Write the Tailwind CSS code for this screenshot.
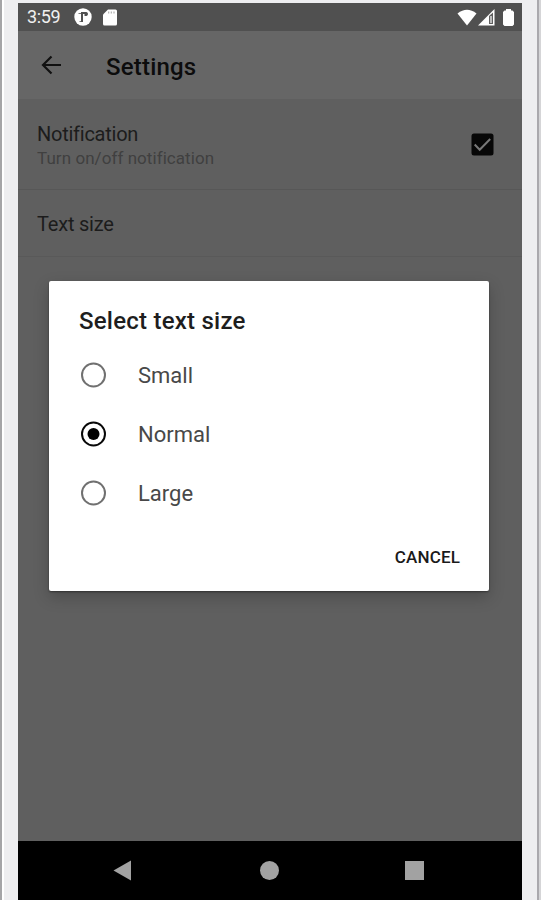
<!DOCTYPE html>
<html lang="en">
<head>
    <meta charset="UTF-8">
    <meta name="viewport" content="width=device-width, initial-scale=1.0">
    <title>Settings</title>
    <script src="https://cdn.jsdelivr.net/npm/@tailwindcss/browser@4"></script>
</head>
<body class="bg-[#eeeef0] font-[Roboto,sans-serif]">
    <!-- Phone frame -->
    <div class="relative w-[541px] h-[900px] overflow-hidden border-l-2 border-[#a5a5a7] pl-4 pr-[19px] pt-[3px] flex flex-col">
        <div class="absolute left-0 top-0 w-[2px] h-full bg-white"></div>
        <div class="absolute right-[2px] top-0 w-[2px] h-full bg-[#aaa9ad]"></div>
        <div class="absolute right-0 top-0 w-[2px] h-full bg-[#d5d5d7]"></div>

        <!-- Status bar -->
        <header class="h-[28px] shrink-0 bg-[#505050] flex items-center text-white pl-[9px] pr-[8px]">
            <span class="text-[18px] leading-none w-[47px] tracking-[-0.4px] text-[#f0f0f0]">3:59</span>
            <svg class="w-[18px] h-[18px]" viewBox="0 0 18 18">
                <circle cx="9" cy="9" r="8.7" fill="#fff"/>
                <path d="M4.500 5.500H7.800V13.500H5.500" fill="none" stroke="#777" stroke-width="1.200"/>
                <path d="M7 14V4H9V14ZM9 4H12.500Q14 4.300 14 6T12.500 8H10.500V6H9Z" fill="#505050"/>
            </svg>
            <svg class="w-[14px] h-[17px] ml-[11px]" viewBox="0 0 14 17">
                <path d="M5 .5H12.500Q14 .5 14 2V15Q14 16.500 12.500 16.500H1.500Q0 16.500 0 15V5.500Z" fill="#fff"/>
                <path d="M5.700 2.500V4.500M8.300 2.500V4.500M11 2.500V4.500" stroke="#aaa" stroke-width="1.100"/>
            </svg>
            <svg class="w-[20px] h-[17px] ml-auto" viewBox="0 0 20 17">
                <path d="M10 16.500L.5 4.500Q10-3 19.500 4.500Z" fill="#fff"/>
            </svg>
            <svg class="w-[17px] h-[17px] ml-px" viewBox="0 0 17 17">
                <path d="M0 16.500L16.500 0V16.500Z" fill="#fff"/>
                <path d="M11 7L15 3.500V15H11Z" fill="#606060"/>
                <path d="M13 7V14" stroke="#ddd" stroke-width="1.500"/>
            </svg>
            <svg class="w-[11px] h-[17px] ml-[8px]" viewBox="0 0 11 17">
                <path d="M3 0H8V1.500H9.500L11 3V15.500L9.500 17H1.500L0 15.500V3L1.500 1.500H3Z" fill="#fff"/>
            </svg>
        </header>

        <!-- App bar -->
        <div class="h-[68px] shrink-0 bg-[#666] flex items-center pl-[23px]">
            <svg class="w-[21px] h-[20px]" viewBox="0 0 21 20" fill="none" stroke="#111" stroke-width="2.200">
                <path d="M20 10H2M10.500 1.500L2 10L10.500 18.500"/>
            </svg>
            <h1 class="ml-[44px] pt-[3px] text-[24px] leading-none tracking-[0.2px] font-medium text-[#0c0c0c]">Settings</h1>
        </div>

        <main class="grow bg-[#5f5f5f]">
            <div class="h-[91px] border-b border-[#575757] flex items-center justify-between pl-[19px] pr-[28px]">
                <div class="pt-[4px]">
                    <div class="text-[20px] leading-[24px] tracking-[-0.25px] text-[#1c1c1c]">Notification</div>
                    <div class="text-[17px] leading-[25px] tracking-[0.06px] text-[#404040]">Turn on/off notification</div>
                </div>
                <svg class="w-[23px] h-[23px]" viewBox="0 0 23 23">
                    <rect x=".5" y=".5" width="22" height="22" rx="2.500" fill="#070707"/>
                    <path d="M3.700 11.500L8.700 16.800L19.200 6" fill="none" stroke="#777" stroke-width="2"/>
                </svg>
            </div>
            <div class="h-[67px] border-b border-[#595959] flex items-center pl-[19px] pt-px text-[20px] tracking-[-0.2px] text-[#1c1c1c]">Text size</div>
        </main>

        <!-- Navigation bar -->
        <nav class="h-[59px] shrink-0 bg-black flex items-center pl-[95px]">
            <svg class="w-[19px] h-[21px]" viewBox="0 0 19 21"><path d="M.5 10.500L18 .5V20.500Z" fill="#a2a2a2"/></svg>
            <div class="w-[19px] h-[19px] ml-[128px] rounded-full bg-[#a2a2a2]"></div>
            <div class="w-[19px] h-[19px] ml-[126px] bg-[#a2a2a2]"></div>
        </nav>

        <!-- Text size dialog -->
        <div class="absolute left-[47px] top-[281px] w-[440px] h-[310px] rounded-[2px] bg-white shadow-[0_6px_16px_0_rgba(0,0,0,0.22),0_1px_2px_rgba(0,0,0,0.4)] pl-[30px] pr-[29px] pt-[25px]">
            <h2 class="text-[24px] leading-[30px] tracking-[0.23px] font-medium text-[#1e1e1e]">Select text size</h2>
            <div class="mt-[10px] text-[22px] text-[#484848]">
                <label class="h-[59px] flex items-center gap-[31px]">
                    <svg class="w-[28px] h-[28px]" viewBox="0 0 28 28"><circle cx="14.500" cy="13" r="11.500" fill="none" stroke="#707070" stroke-width="2"/></svg>
                    <span>Small</span>
                </label>
                <label class="h-[59px] flex items-center gap-[31px]">
                    <svg class="w-[28px] h-[28px]" viewBox="0 0 28 28"><circle cx="14.500" cy="13" r="11.500" fill="none" stroke="#080808" stroke-width="2"/><circle cx="14.500" cy="13" r="6" fill="#000"/></svg>
                    <span>Normal</span>
                </label>
                <label class="h-[59px] flex items-center gap-[31px]">
                    <svg class="w-[28px] h-[28px]" viewBox="0 0 28 28"><circle cx="14.500" cy="13" r="11.500" fill="none" stroke="#707070" stroke-width="2"/></svg>
                    <span>Large</span>
                </label>
            </div>
            <div class="mt-[22px] flex justify-end">
                <button class="text-[17px] leading-[24px] tracking-[0.15px] font-medium text-[#1a1a1a]">CANCEL</button>
            </div>
        </div>
    </div>
</body>
</html>
